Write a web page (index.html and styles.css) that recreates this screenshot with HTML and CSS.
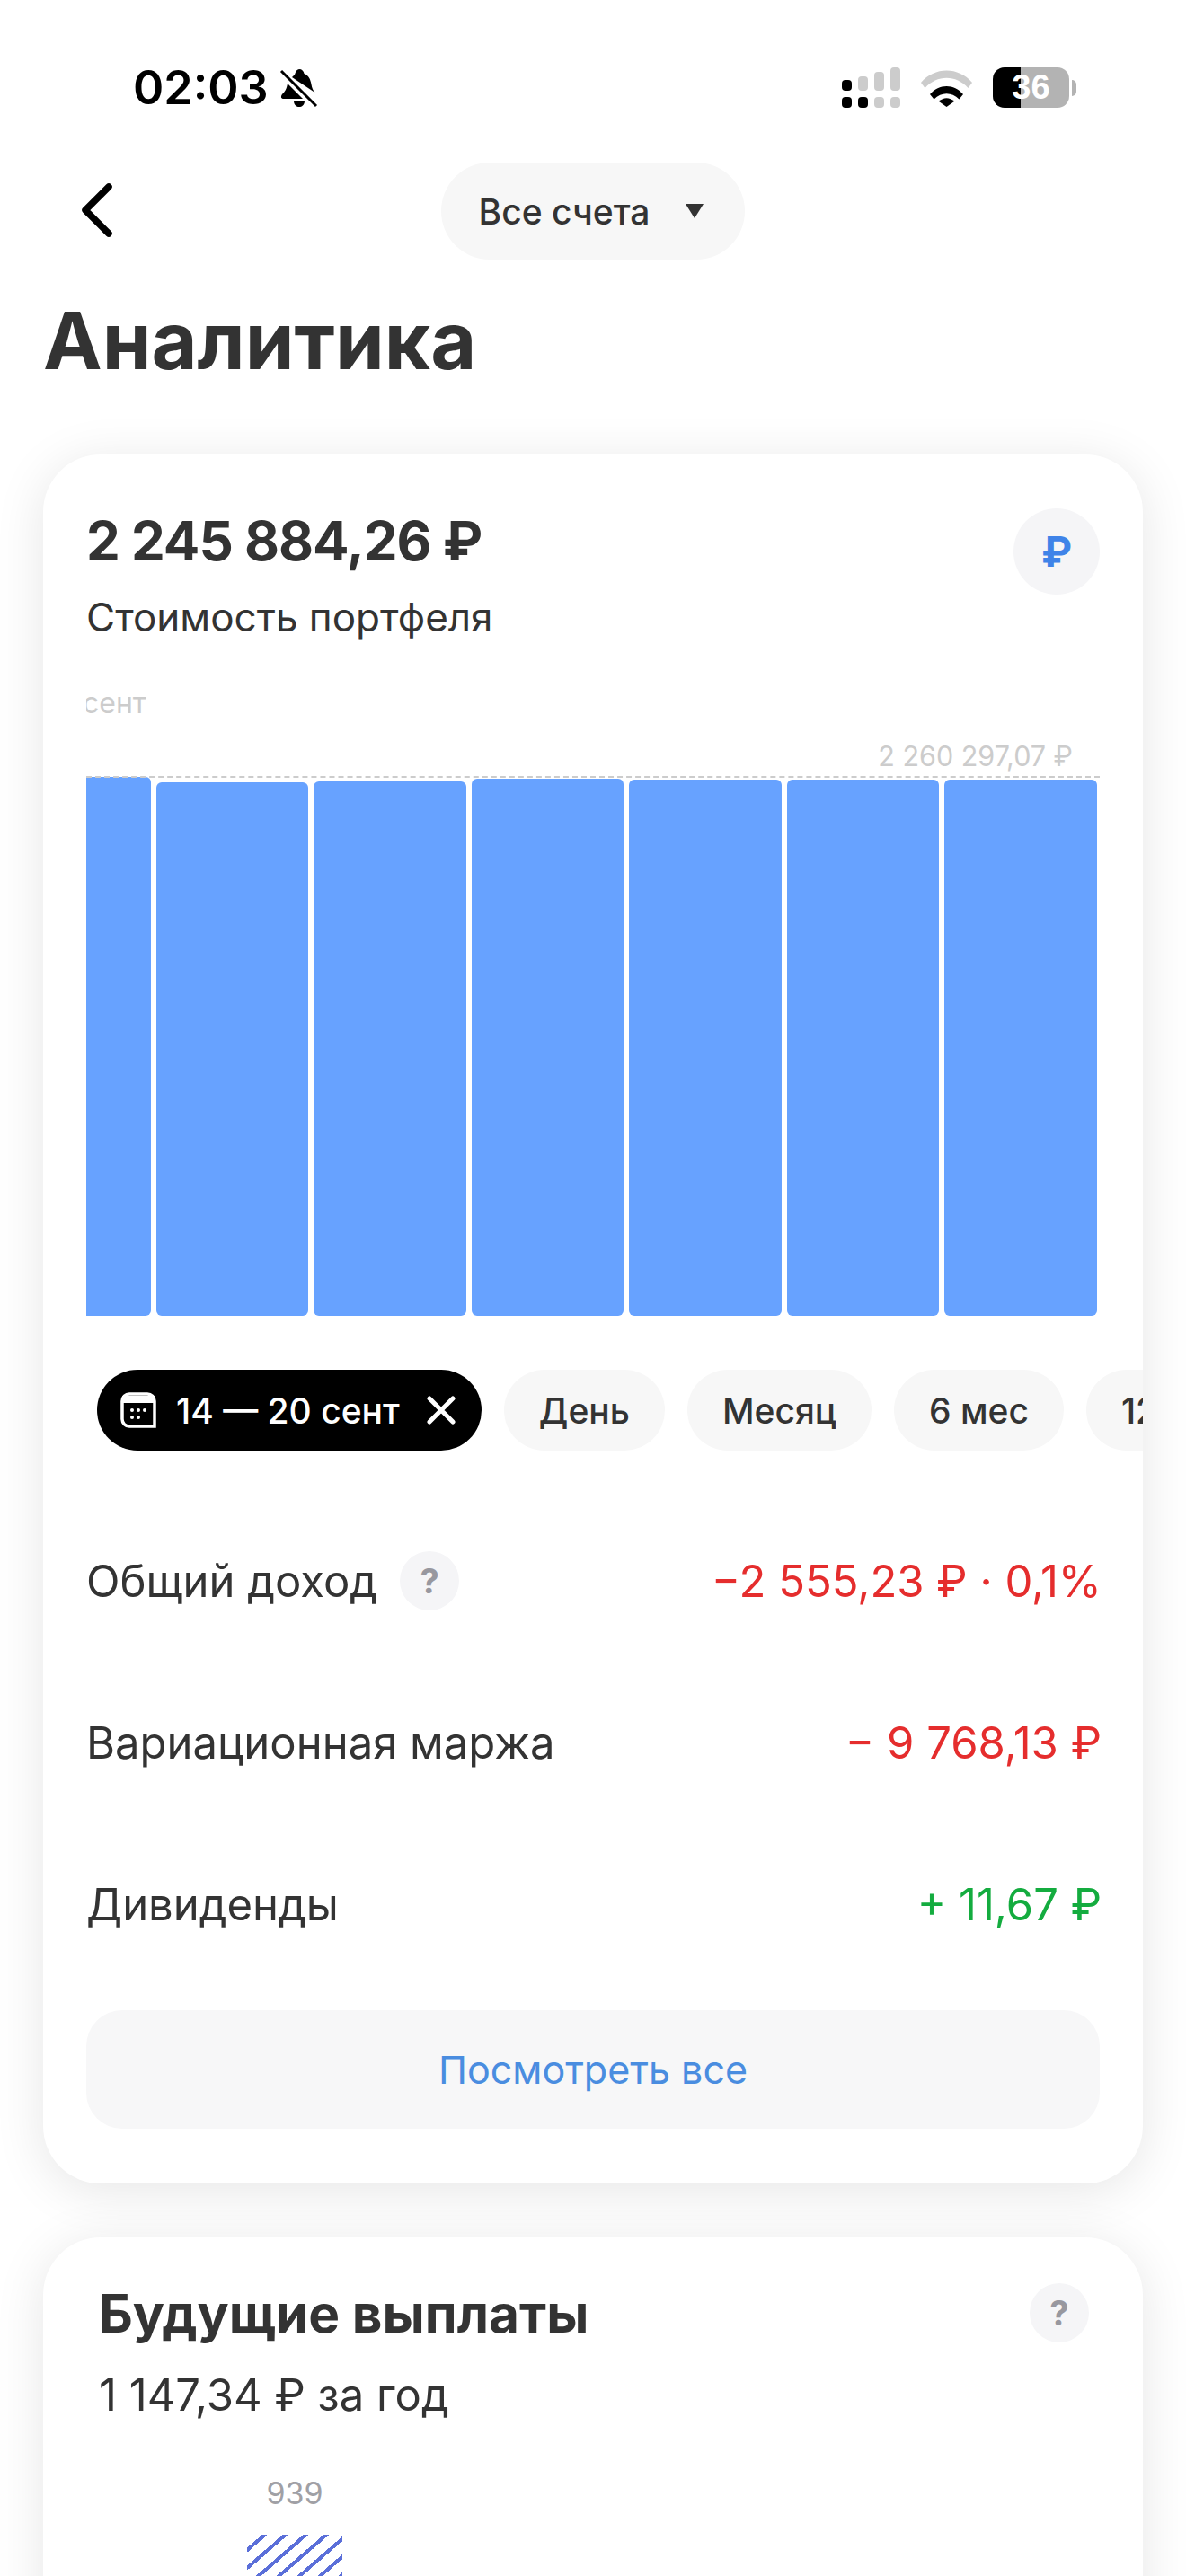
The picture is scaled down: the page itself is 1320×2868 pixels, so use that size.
FILE: index.html
```html
<!DOCTYPE html>
<html lang="ru">
<head>
    <meta charset="UTF-8">
    <meta name="viewport" content="width=device-width, initial-scale=1.0">
    <title>Аналитика</title>
    <link rel="stylesheet" href="styles.css">
</head>
<body>

    <div class="status-bar">
        <div class="status-left">
            <span class="status-time">02:03</span>
            <svg class="bell-icon" viewBox="0 0 44 44" width="44" height="44">
                <path d="M17 7c1-4 3-6 5-6 3 0 5 2 5.5 5 5 2 7 6 8 12 .6 4 2 7 4 9L14 10c1-1 2-2 3-3z" fill="#000"/>
                <path d="M9 17l17 17H5c-3 0-4-2-2-5 3-3 5-6 6-12z" fill="#000"/>
                <path d="M16 37h12c-.5 4-3 6-6 6s-5.5-2-6-6z" fill="#000"/>
                <path d="M2 3l39 39" stroke="#fff" stroke-width="6"/>
                <path d="M2 3l39 39" stroke="#000" stroke-width="3"/>
            </svg>
        </div>
        <div class="status-right">
            <svg viewBox="0 0 65 45" width="65" height="45">
                <rect x="0" y="14" width="11" height="12" rx="4" fill="#000"/>
                <rect x="18" y="10" width="11" height="16" rx="4" fill="#ccc"/>
                <rect x="36" y="5" width="11" height="21" rx="4" fill="#ccc"/>
                <rect x="54" y="0" width="11" height="26" rx="4" fill="#ccc"/>
                <rect x="0" y="33" width="11" height="12" rx="4" fill="#000"/>
                <rect x="18" y="33" width="11" height="12" rx="4" fill="#000"/>
                <rect x="36" y="33" width="11" height="12" rx="4" fill="#ccc"/>
                <rect x="54" y="33" width="11" height="12" rx="4" fill="#ccc"/>
            </svg>
            <svg viewBox="0 0 57 42" width="57" height="42">
                <path d="M0 15C15 -3 42 -3 57 15l-4.500 6C39 6 18 6 4.500 21z" fill="#ccc"/>
                <path d="M10 28C20 16 37 16 47 28l-4.500 5.500C34 25 23 25 14.500 33.500z" fill="#000"/>
                <path d="M20 36c5-5 12-5 17 0l-8.500 6z" fill="#000"/>
            </svg>
            <div class="battery">
                <div class="battery-body"><span class="battery-level">36</span></div>
                <div class="battery-nub"></div>
            </div>
        </div>
    </div>

    <div class="nav-row">
        <svg class="back-icon" viewBox="0 0 36 60" width="36" height="60">
            <path d="M31 4L5 30l26 26" fill="none" stroke="#000" stroke-width="7.5" stroke-linecap="round" stroke-linejoin="round"/>
        </svg>
        <div class="account-pill">
            <span>Все счета</span>
            <span class="pill-arrow"></span>
        </div>
    </div>

    <h1 class="page-title">Аналитика</h1>

    <div class="card">
        <div class="card-head">
            <div>
                <div class="amount">2 245 884,26 ₽</div>
                <div class="amount-label">Стоимость портфеля</div>
            </div>
            <div class="currency-btn">₽</div>
        </div>

        <div class="chart">
            <div class="chart-date"><span>сент</span></div>
            <div class="chart-max">2 260 297,07 ₽</div>
            <div class="chart-bars">
                <div class="bar" style="height: 600px"></div>
                <div class="bar" style="height: 594px"></div>
                <div class="bar" style="height: 595px"></div>
                <div class="bar" style="height: 598px"></div>
                <div class="bar" style="height: 597px"></div>
                <div class="bar" style="height: 597px"></div>
                <div class="bar" style="height: 597px"></div>
            </div>
            <div class="chart-line"></div>
        </div>

        <div class="periods">
            <div class="chip chip-active">
                <svg viewBox="0 0 40 40" width="40" height="40">
                    <path d="M2 10a8 8 0 0 1 8-8h20a8 8 0 0 1 8 8v28H10a8 8 0 0 1-8-8z" fill="none" stroke="#fff" stroke-width="3.5"/>
                    <path d="M2 4h36v8H2z" fill="#fff"/>
                    <circle cx="13" cy="20" r="2" fill="#fff"/><circle cx="20" cy="20" r="2" fill="#fff"/><circle cx="27" cy="20" r="2" fill="#fff"/>
                    <circle cx="13" cy="28" r="2" fill="#fff"/><circle cx="20" cy="28" r="2" fill="#fff"/>
                </svg>
                <span>14 — 20 сент</span>
                <svg class="chip-close" viewBox="0 0 32 32" width="32" height="32">
                    <path d="M3 3l26 26M29 3L3 29" stroke="#fff" stroke-width="5" stroke-linecap="round"/>
                </svg>
            </div>
            <div class="chip">День</div>
            <div class="chip">Месяц</div>
            <div class="chip">6 мес</div>
            <div class="chip">12 мес</div>
        </div>

        <div class="stat-row">
            <div class="stat-name">Общий доход <span class="help">?</span></div>
            <div class="stat-value negative">−2 555,23 ₽ · 0,1%</div>
        </div>
        <div class="stat-row">
            <div class="stat-name">Вариационная маржа</div>
            <div class="stat-value negative">− 9 768,13 ₽</div>
        </div>
        <div class="stat-row">
            <div class="stat-name">Дивиденды</div>
            <div class="stat-value positive">+ 11,67 ₽</div>
        </div>

        <div class="view-all">Посмотреть все</div>
    </div>

    <div class="card card-payouts">
        <div class="card-head">
            <div>
                <div class="payouts-title">Будущие выплаты</div>
                <div class="payouts-sum">1 147,34 ₽ за год</div>
            </div>
            <span class="help">?</span>
        </div>
        <div class="payouts-chart">
            <div class="payouts-value">939</div>
            <div class="payouts-bar"></div>
        </div>
    </div>

</body>
</html>
```

FILE: styles.css
```css
* {
    box-sizing: border-box;
}

body {
    font-family: Inter, "Noto Sans", sans-serif;
    background-color: #fff;
    color: #333;
    width: 1320px;
    height: 2868px;
    margin: 0;
    overflow: hidden;
}

.status-bar {
    display: flex;
    justify-content: space-between;
    align-items: center;
    height: 181px;
    padding: 14px 122px 0 148px;
    color: #000;
}

.status-left {
    display: flex;
    align-items: center;
    gap: 12px;
}

.status-time {
    font-size: 52px;
    font-weight: 600;
}

.status-right {
    display: flex;
    align-items: center;
    gap: 23px;
}

.battery {
    display: flex;
    align-items: center;
    gap: 3px;
}

.battery-body {
    width: 85px;
    height: 45px;
    border-radius: 13px;
    background: linear-gradient(to right, #000 36%, #b3b3b3 36%);
    color: #fff;
    font-family: "Liberation Sans", sans-serif;
    font-size: 38px;
    font-weight: 700;
    line-height: 45px;
    text-align: center;
}

.battery-nub {
    width: 5px;
    height: 18px;
    background-color: #b3b3b3;
    border-radius: 0 5px 5px 0;
}

.nav-row {
    display: flex;
    align-items: center;
    justify-content: center;
    position: relative;
    height: 108px;
}

.back-icon {
    position: absolute;
    left: 90px;
    top: 23px;
}

.account-pill {
    display: flex;
    align-items: center;
    gap: 40px;
    height: 108px;
    padding: 0 46px 0 42px;
    background-color: #f7f7f7;
    border-radius: 54px;
    font-size: 39px;
    font-weight: 500;
}

.pill-arrow {
    width: 0;
    height: 0;
    border-left: 10px solid transparent;
    border-right: 10px solid transparent;
    border-top: 16px solid #333;
}

.page-title {
    margin: 36px 0 0 48px;
    height: 181px;
    font-size: 88px;
    font-weight: 700;
    line-height: 108px;
}

.card {
    margin: 0 48px 60px;
    padding: 60px 48px 61px 48px;
    background-color: #fff;
    border-radius: 64px;
    box-shadow: 0 8px 56px rgba(0, 0, 0, 0.1);
}

.card-head {
    display: flex;
    justify-content: space-between;
    align-items: flex-start;
}

.amount {
    font-size: 60px;
    font-weight: 700;
    letter-spacing: -1px;
    line-height: 72px;
}

.amount-label {
    margin-top: 21px;
    font-size: 44px;
    line-height: 56px;
}

.currency-btn {
    width: 96px;
    height: 96px;
    border-radius: 50%;
    background-color: #f5f5f7;
    color: #3f83e8;
    font-size: 46px;
    font-weight: 700;
    line-height: 96px;
    text-align: center;
}

.chart {
    position: relative;
    height: 702px;
    margin-top: 48px;
    overflow: hidden;
}

.chart-date {
    color: #ccc;
    font-size: 32px;
    line-height: 40px;
}

.chart-date span {
    margin-left: -4px;
}

.chart-max {
    position: absolute;
    right: 30px;
    top: 59px;
    color: #ccc;
    font-size: 30.5px;
    line-height: 40px;
}

.chart-line {
    position: absolute;
    left: 0;
    right: 0;
    top: 101px;
    border-top: 2px dashed #ccc;
}

.chart-bars {
    position: absolute;
    left: -98px;
    bottom: 0;
    display: flex;
    align-items: flex-end;
    gap: 6px;
}

.bar {
    width: 169.5px;
    background-color: #67a2ff;
    border-radius: 6px;
}

.periods {
    display: flex;
    gap: 25px;
    margin: 60px -48px 0 12px;
    overflow: hidden;
}

.chip {
    display: flex;
    align-items: center;
    flex-shrink: 0;
    height: 90px;
    padding: 0 39px;
    background-color: #f7f7f7;
    border-radius: 45px;
    font-size: 39px;
    font-weight: 500;
}

.chip-active {
    gap: 22px;
    padding: 0 29px 0 26px;
    background-color: #000;
    color: #fff;
}

.chip-close {
    margin-left: 8px;
}

.stat-row {
    display: flex;
    justify-content: space-between;
    align-items: center;
    height: 180px;
    font-size: 49px;
}

.periods + .stat-row {
    margin-top: 55px;
}

.stat-name {
    display: flex;
    align-items: center;
    gap: 25px;
}

.stat-value {
    margin-right: -2px;
}

.help {
    display: inline-block;
    width: 66px;
    height: 66px;
    border-radius: 50%;
    background-color: #f5f5f7;
    color: #98989f;
    font-size: 38px;
    font-weight: 700;
    line-height: 66px;
    text-align: center;
}

.negative {
    color: #e52d2d;
}

.positive {
    color: #14ac3f;
}

.view-all {
    height: 132px;
    margin-top: 28px;
    background-color: #f7f7f8;
    border-radius: 40px;
    color: #4a8de0;
    font-size: 43px;
    line-height: 132px;
    text-align: center;
}

.card-payouts {
    padding: 51px 60px 60px 62px;
}

.payouts-title {
    font-size: 58.5px;
    font-weight: 700;
    line-height: 68px;
}

.payouts-sum {
    margin-top: 27px;
    font-size: 49px;
    line-height: 60px;
}

.payouts-chart {
    width: 106px;
    margin: 59px 0 0 165px;
    text-align: center;
}

.payouts-value {
    color: #a0a0a5;
    font-size: 34px;
    line-height: 40px;
}

.payouts-bar {
    height: 120px;
    margin-top: 26px;
    background: repeating-linear-gradient(139deg, #fff 0, #fff 11px, #5b6fd9 11px, #5b6fd9 15px);
}
```
